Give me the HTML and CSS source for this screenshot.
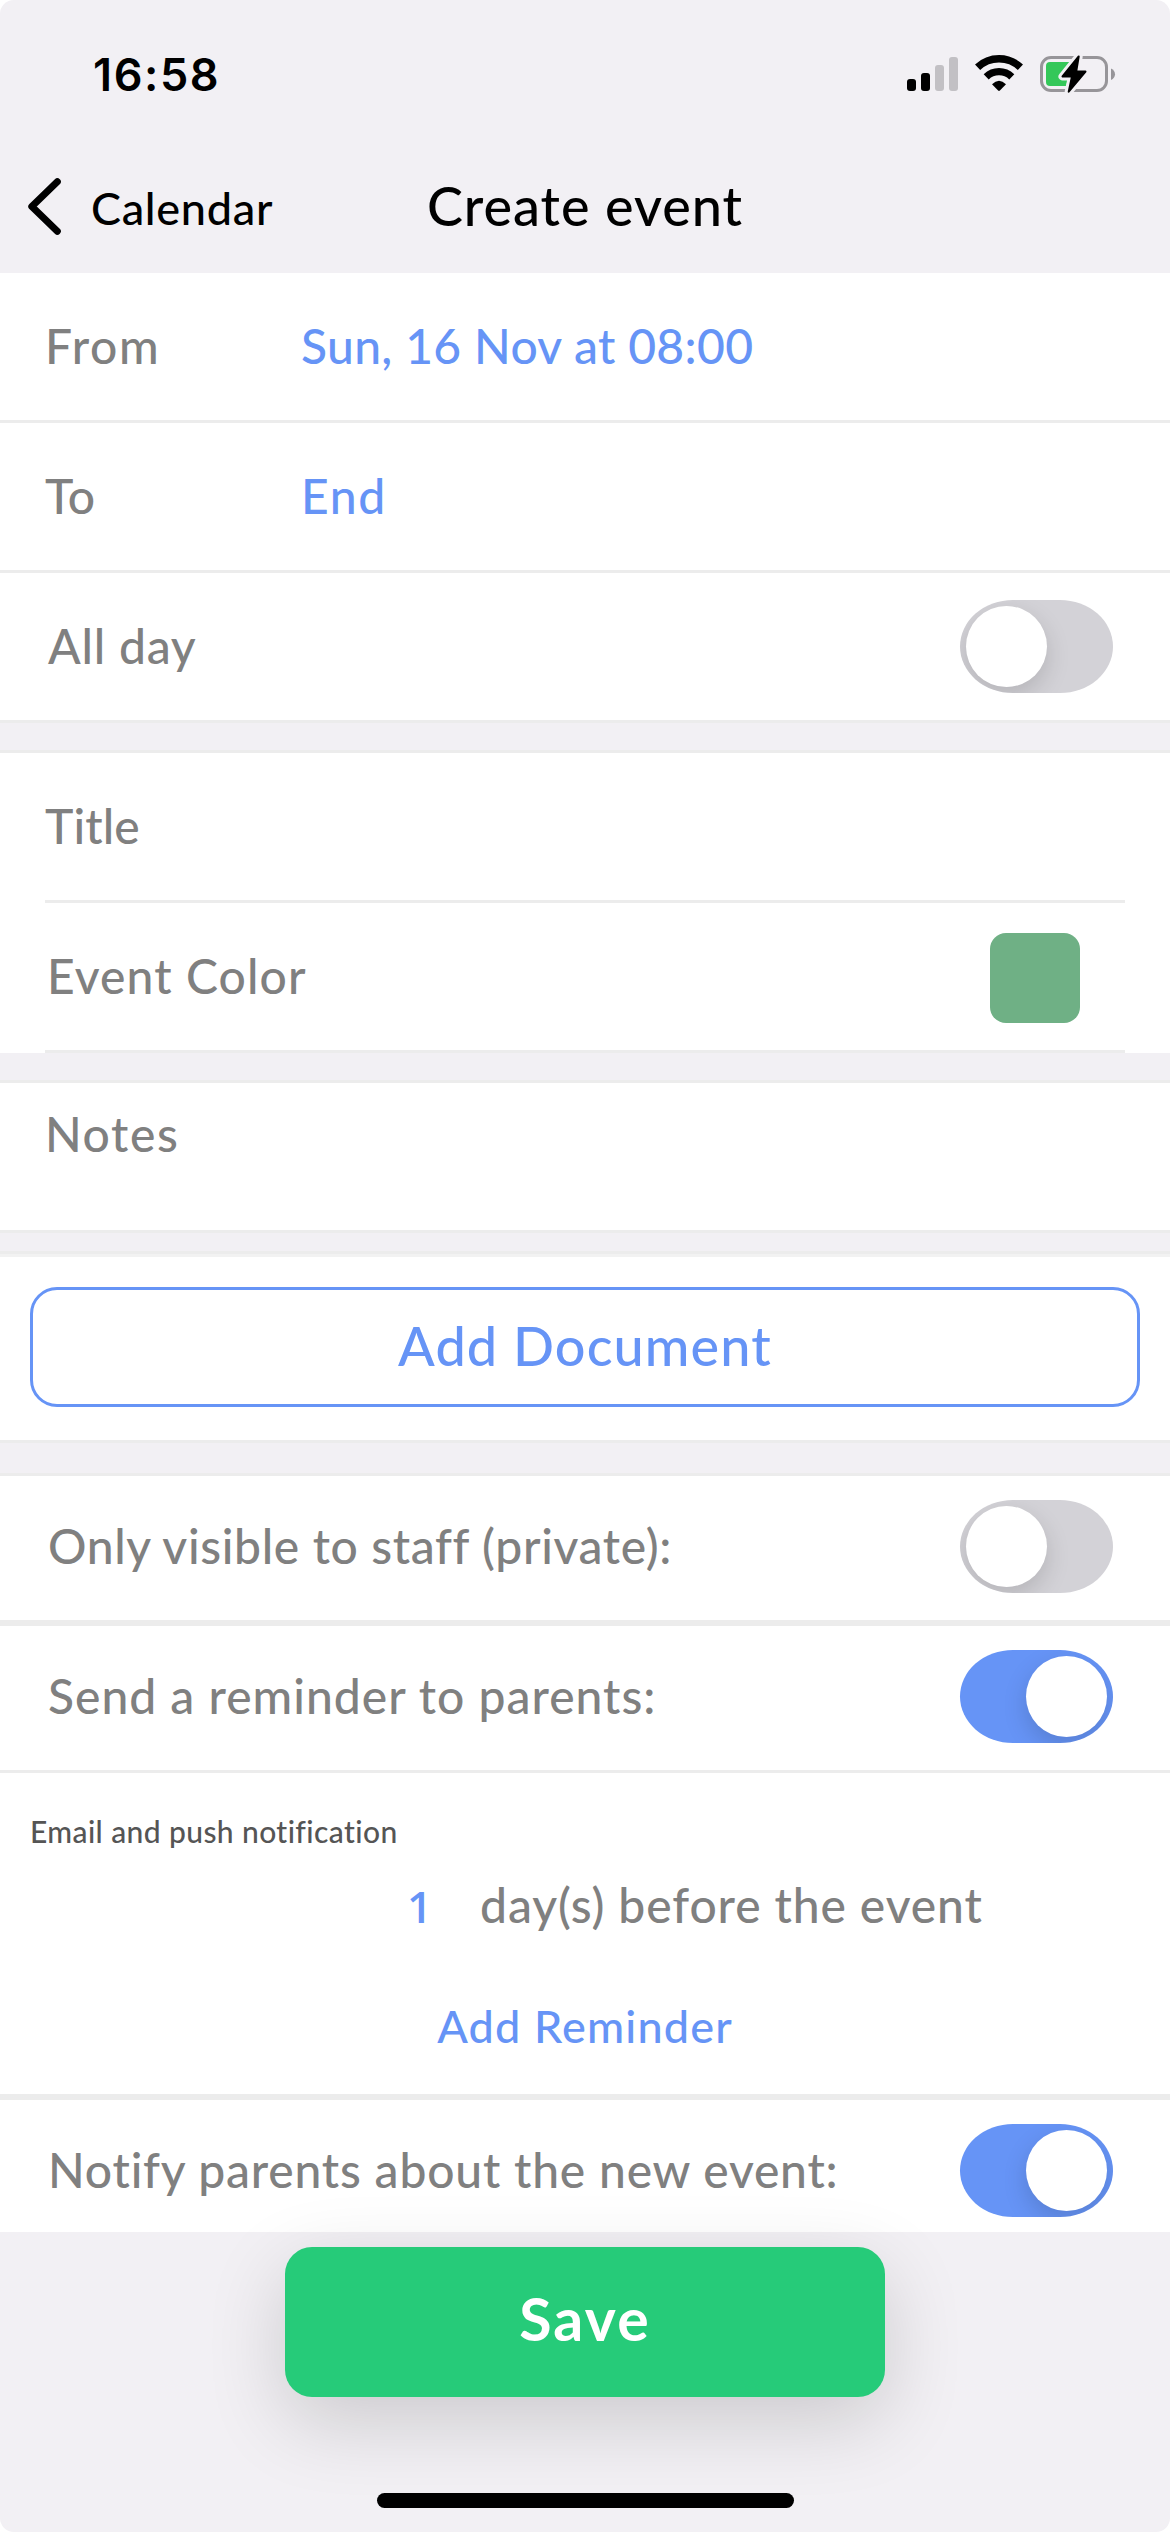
FILE: index.html
```html
<!DOCTYPE html>
<html lang="en">
<head>
<meta charset="utf-8">
<title>Create event</title>
<link rel="stylesheet" href="styles.css">
</head>
<body>
<div class="screen">
  <div class="status-bar">
    <span class="status-time">16:58</span>
    <svg class="status-icons" width="235" height="60" viewBox="0 0 235 60">
      <g>
        <rect x="12" y="34" width="9" height="12" rx="3"/>
        <rect x="26" y="28" width="9" height="18" rx="3"/>
        <rect x="40" y="20" width="9" height="26" rx="3" fill="#c2c0c4"/>
        <rect x="54" y="12" width="9" height="34" rx="3" fill="#c2c0c4"/>
      </g>
      <g fill="none" stroke="#000">
        <path d="M82.6 22.3A31.2 31.2 0 0 1 125.4 22.3" stroke-width="7.5"/>
        <path d="M91.2 31.8A18.4 18.4 0 0 1 116.8 31.8" stroke-width="7.2"/>
      </g>
      <path d="M97 39.3Q104 32.3 111 39.3L104.9 45.5Q104 46.3 103.1 45.5Z"/>
      <rect x="146.5" y="12.5" width="65" height="33" rx="9.5" fill="none" stroke="#979599" stroke-width="3"/>
      <path d="M216 23.5Q220 25.500 220 29.250T216 35Z" fill="#979599"/>
      <path d="M155 17H178L171 41H155Q151 41 151 37V21Q151 17 155 17Z" fill="#34c759"/>
      <g stroke-linejoin="round">
        <path d="M183.700 11.500L167.500 31.500H177L173.700 46.700L190.500 26.500H181.200Z" fill="#f2f0f4" stroke="#f2f0f4" stroke-width="8"/>
        <path d="M183.700 11.500L167.500 31.500H177L173.700 46.700L190.500 26.500H181.200Z" stroke="#000" stroke-width="2"/>
      </g>
    </svg>
  </div>

  <header class="nav">
    <a class="nav-back">
      <svg class="nav-chevron" width="36" height="60" viewBox="0 0 36 60">
        <path d="M32.300 4.800L6.800 29.500L32.300 54.200" fill="none" stroke="#000" stroke-width="7" stroke-linecap="round" stroke-linejoin="round"/>
      </svg>
      <span class="nav-back-label">Calendar</span>
    </a>
    <h1 class="nav-title">Create event</h1>
  </header>

  <main class="form">
    <div class="row row-date">
      <span class="label label-field label-wide">From</span>
      <span class="value value-date">Sun, 16 Nov at 08:00</span>
    </div>
    <div class="row row-date">
      <span class="label label-field label-tight">To</span>
      <span class="value label-wide">End</span>
    </div>
    <div class="row row-switch">
      <span class="label">All day</span>
      <span class="switch"><span class="knob"></span></span>
    </div>

    <div class="spacer spacer-ruled"></div>

    <div class="row row-inset">
      <span class="label label-tight">Title</span>
    </div>
    <div class="row row-inset row-color">
      <span class="label label-color">Event Color</span>
      <span class="swatch"></span>
    </div>

    <div class="spacer spacer-ruled"></div>

    <div class="row row-notes">
      <span class="label label-wide">Notes</span>
    </div>

    <div class="spacer spacer-document"></div>

    <div class="document">
      <button class="document-button">Add Document</button>
    </div>

    <div class="spacer spacer-ruled spacer-large"></div>

    <div class="row row-switch row-option">
      <span class="label label-private">Only visible to staff (private):</span>
      <span class="switch"><span class="knob"></span></span>
    </div>
    <div class="rule"></div>
    <div class="row row-switch row-option">
      <span class="label label-reminder">Send a reminder to parents:</span>
      <span class="switch switch-on"><span class="knob"></span></span>
    </div>
    <section class="reminder">
      <p class="reminder-kind">Email and push notification</p>
      <div class="reminder-when">
        <span class="reminder-count">1</span>
        <span class="label">day(s) before the event</span>
      </div>
      <a class="reminder-add">Add Reminder</a>
    </section>
    <div class="rule rule-thick"></div>
    <div class="row row-switch row-notify">
      <span class="label">Notify parents about the new event:</span>
      <span class="switch switch-on"><span class="knob"></span></span>
    </div>
  </main>

  <footer class="footer">
    <button class="save-button">Save</button>
    <div class="home-indicator"></div>
  </footer>
</div>
</body>
</html>
```
FILE: styles.css
```css
* {
  box-sizing: border-box;
}

body {
  margin: 0;
  background: #fff;
  font-family: Lato, sans-serif;
  font-weight: 500;
}

button {
  font: inherit;
}

.screen {
  display: flex;
  flex-direction: column;
  width: 1170px;
  height: 2532px;
  overflow: hidden;
  border-radius: 14px;
  background: #f2f0f4;
}

/* Status bar */

.status-bar {
  display: flex;
  align-items: center;
  justify-content: space-between;
  height: 150px;
  padding: 0 40px 0 93px;
}

.status-time {
  font: 600 45px/60px Inter, sans-serif;
  letter-spacing: 1.6px;
}

.status-icons {
  display: block;
}

/* Navigation */

.nav {
  display: grid;
  grid-template-columns: 1fr auto 1fr;
  align-items: center;
  height: 123px;
  padding-bottom: 9px;
}

.nav-back {
  display: flex;
  align-items: center;
  padding-left: 25px;
}

.nav-chevron {
  display: block;
}

.nav-back-label {
  padding-top: 2px;
  padding-left: 30px;
  font-size: 45px;
  line-height: 60px;
  letter-spacing: 0.7px;
}

.nav-title {
  margin: 0;
  padding-bottom: 3px;
  font-size: 54px;
  font-weight: 500;
  line-height: 66px;
  letter-spacing: 0.95px;
}

/* Form rows */

.row {
  display: flex;
  align-items: center;
  height: 150px;
  border-bottom: 3px solid #ececec;
  background: #fff;
}

.label,
.value {
  padding-bottom: 2px;
  color: #808080;
  font-size: 48px;
  line-height: 58px;
  letter-spacing: 0.8px;
  white-space: nowrap;
}

.value {
  color: #6694f6;
}

.value-date {
  letter-spacing: 0.35px;
}

.label-wide {
  letter-spacing: 1.6px;
}

.label-tight {
  letter-spacing: 0.1px;
}

.label-color {
  padding-bottom: 5px;
  letter-spacing: 1.1px;
}

.label-private {
  letter-spacing: 0.65px;
}

.label-reminder {
  letter-spacing: 1px;
}

.row-date {
  padding-left: 45px;
}

.label-field {
  width: 256px;
}

.row-switch {
  justify-content: space-between;
  padding: 0 57px 0 48px;
}

.row-inset {
  padding: 0 45px 3px;
  border-bottom: 0;
  background: linear-gradient(#ececec, #ececec) 45px 100% / 1080px 3px no-repeat #fff;
}

.row-color {
  justify-content: space-between;
  padding: 0 90px 0 47px;
}

.swatch {
  width: 90px;
  height: 90px;
  border-radius: 16px;
  background: #6fb085;
}

.row-notes {
  align-items: flex-start;
  padding: 22px 45px 0;
}

.row-option {
  height: 147px;
  padding-bottom: 3px;
}

.rule {
  height: 3px;
  background: #ececec;
}

.rule-thick {
  height: 6px;
}

.row-notify {
  height: 132px;
  padding-top: 9px;
  border-bottom: 0;
}

/* Bands between groups */

.spacer {
  height: 30px;
}

.spacer-ruled {
  border-bottom: 3px solid #ececec;
}

.spacer-large {
  height: 33px;
}

.spacer-document {
  height: 24px;
  border-bottom: 3px solid #f2f2f2;
  box-shadow: inset 0 -3px #ececec;
}

/* Switch */

.switch {
  display: flex;
  flex: none;
  width: 153px;
  height: 93px;
  padding: 6px;
  overflow: hidden;
  border-radius: 53px / 46.5px;
  background: #d3d2d7;
}

.switch-on {
  justify-content: flex-end;
  background: #6694f6;
}

.knob {
  width: 81px;
  height: 81px;
  border-radius: 50%;
  background: #fff;
  box-shadow: 0 9px 24px rgba(0, 0, 0, 0.15);
}

/* Document */

.document {
  height: 186px;
  padding: 30px 30px 0;
  border-bottom: 3px solid #ececec;
  background: #fff;
}

.document-button {
  display: block;
  width: 100%;
  height: 120px;
  padding: 0 0 4px;
  border: 3px solid #6694f6;
  border-radius: 27px;
  background: none;
  color: #6694f6;
  font-size: 54px;
  letter-spacing: 1.1px;
}

/* Reminder */

.reminder {
  display: flex;
  flex-direction: column;
  height: 321px;
  padding-top: 38px;
  background: #fff;
}

.reminder-kind {
  margin: 0;
  padding-left: 30px;
  color: #555;
  font-size: 30px;
  line-height: 40px;
  letter-spacing: 0.4px;
}

.reminder-when {
  display: flex;
  align-items: baseline;
  height: 60px;
  margin-top: 24px;
  padding-left: 407px;
}

.reminder-when .label {
  line-height: 60px;
  letter-spacing: 0.9px;
}

.reminder-count {
  width: 73px;
  color: #6694f6;
  font: 600 44px/60px "Open Sans", sans-serif;
}

.reminder-add {
  align-self: center;
  margin-top: 61px;
  color: #6694f6;
  font-size: 45px;
  line-height: 60px;
  letter-spacing: 1.15px;
}

/* Footer */

.footer {
  display: flex;
  flex: 1;
  flex-direction: column;
  align-items: center;
  padding-top: 15px;
}

.save-button {
  width: 600px;
  height: 150px;
  padding: 0 0 7px;
  border: 0;
  border-radius: 27px;
  background: #26cb79;
  box-shadow: 0 24px 80px rgba(0, 0, 0, 0.16);
  color: #fff;
  font-size: 59px;
  font-weight: 700;
  letter-spacing: 2.2px;
}

.home-indicator {
  width: 417px;
  height: 15px;
  margin-top: 96px;
  border-radius: 7.5px;
  background: #000;
}
```
